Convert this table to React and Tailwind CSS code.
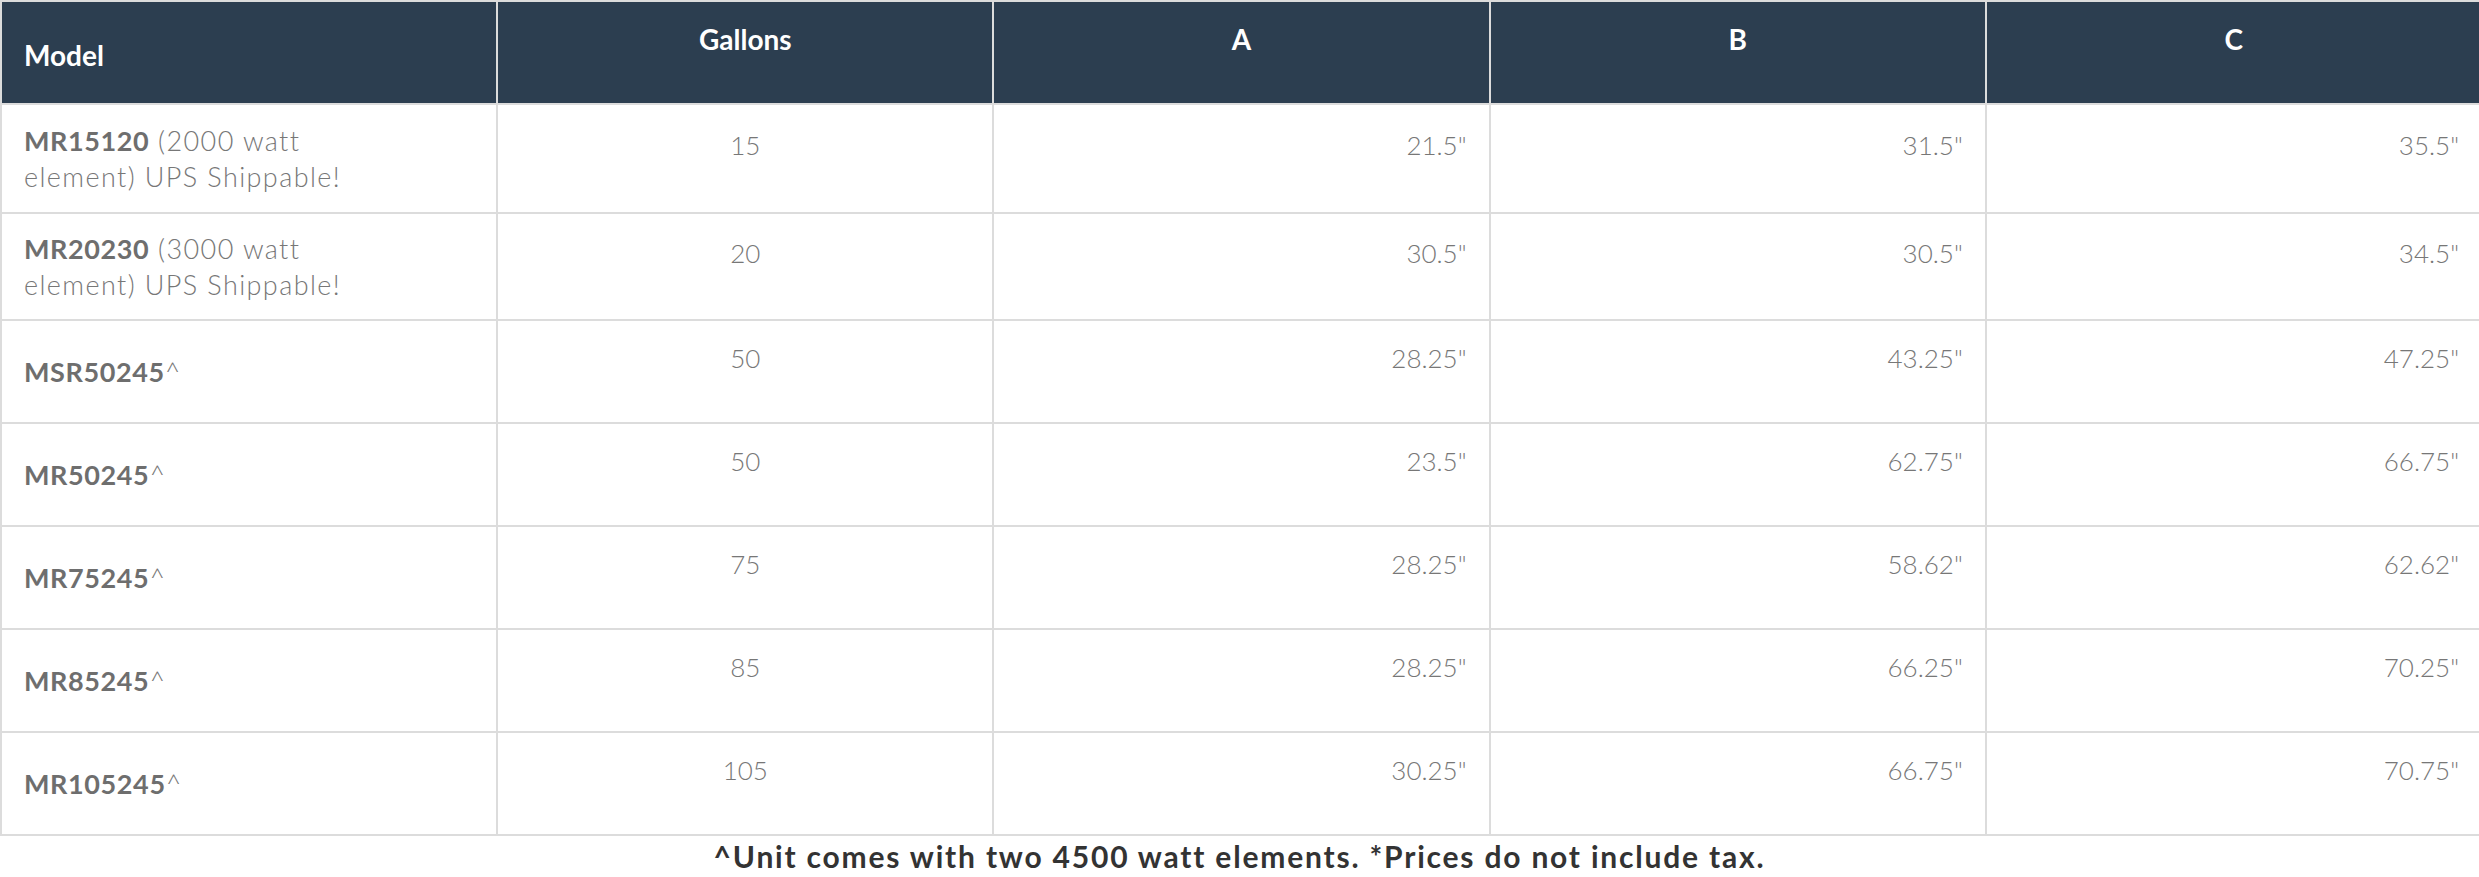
const rows = [
  { model: "MR15120", note: " (2000 watt element) UPS Shippable!", gallons: "15", a: "21.5\"", b: "31.5\"", c: "35.5\"", h: "h-[109px]" },
  { model: "MR20230", note: " (3000 watt element) UPS Shippable!", gallons: "20", a: "30.5\"", b: "30.5\"", c: "34.5\"", h: "h-[107px]" },
  { model: "MSR50245", note: "^", gallons: "50", a: "28.25\"", b: "43.25\"", c: "47.25\"", h: "h-[103px]" },
  { model: "MR50245", note: "^", gallons: "50", a: "23.5\"", b: "62.75\"", c: "66.75\"", h: "h-[103px]" },
  { model: "MR75245", note: "^", gallons: "75", a: "28.25\"", b: "58.62\"", c: "62.62\"", h: "h-[103px]" },
  { model: "MR85245", note: "^", gallons: "85", a: "28.25\"", b: "66.25\"", c: "70.25\"", h: "h-[103px]" },
  { model: "MR105245", note: "^", gallons: "105", a: "30.25\"", b: "66.75\"", c: "70.75\"", h: "h-[103px]" },
]

function NumCell({ children, align = "text-right" }) {
  return (
    <td className={`border-2 border-[#dcdcdc] align-middle px-[22px] pb-[27px] ${align}`}>
      {children}
    </td>
  )
}

export default function App() {
  return (
    <div className="w-[2479px] bg-white font-['Lato',sans-serif] overflow-hidden">
      <table className="table-fixed w-[2483px] border-collapse">
        <thead>
          <tr className="h-[103px] bg-[#2c3e50] text-white text-[28px] font-bold">
            <th className="border-2 border-[#dcdcdc] text-left align-middle pl-[22px] pt-[4px]">Model</th>
            <th className="border-2 border-[#dcdcdc] align-middle pb-[28px]">Gallons</th>
            <th className="border-2 border-[#dcdcdc] align-middle pb-[28px]">A</th>
            <th className="border-2 border-[#dcdcdc] align-middle pb-[28px]">B</th>
            <th className="border-2 border-[#dcdcdc] align-middle pb-[28px]">C</th>
          </tr>
        </thead>
        <tbody className="text-[#777] text-[26px] font-light">
          {rows.map((r) => (
            <tr key={r.model} className={r.h}>
              <td className="border-2 border-[#dcdcdc] align-middle pl-[22px]">
                <div className="w-[360px] leading-[35px]">
                  <span className="font-bold text-[#6e6e6e] text-[27px] tracking-[0.6px]">{r.model}</span>
                  <span className="text-[27px] tracking-[1.4px]">{r.note}</span>
                </div>
              </td>
              <NumCell align="text-center">{r.gallons}</NumCell>
              <NumCell>{r.a}</NumCell>
              <NumCell>{r.b}</NumCell>
              <NumCell>{r.c}</NumCell>
            </tr>
          ))}
        </tbody>
      </table>
      <p className="text-center text-[30px] font-bold text-[#333] leading-[38px] tracking-[1.8px] pt-[1px]">
        ^Unit comes with two 4500 watt elements. *Prices do not include tax.
      </p>
    </div>
  )
}
